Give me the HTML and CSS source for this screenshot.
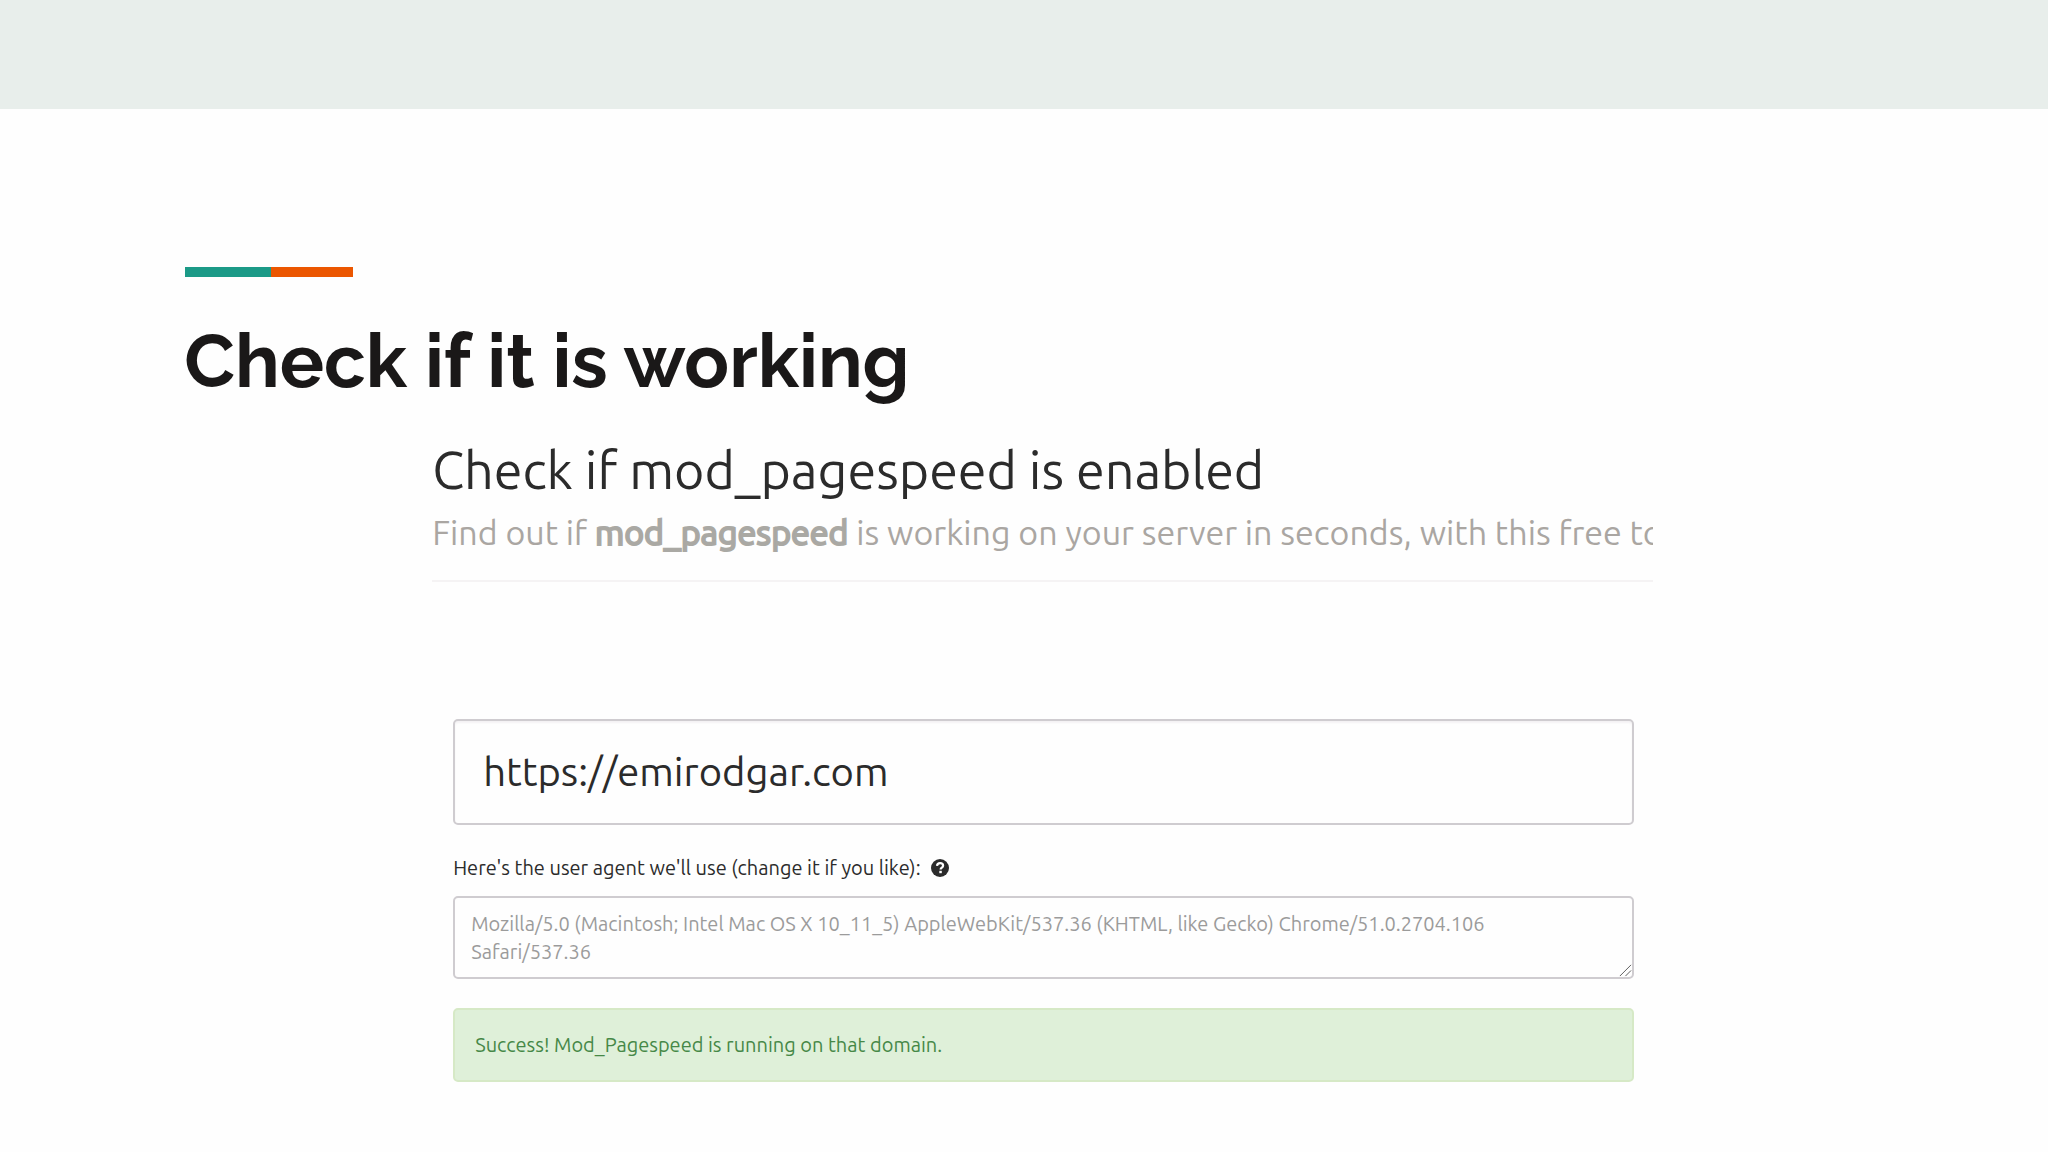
FILE: index.html
```html
<!DOCTYPE html>
<html lang="en">
<head>
<meta charset="utf-8">
<meta name="viewport" content="width=device-width, initial-scale=1">
<title>Check if it is working</title>
<link rel="stylesheet" href="styles.css">
</head>
<body>
<header class="band"></header>
<main class="slide">
  <div class="accent"></div>
  <h1 class="title">Check if it is working</h1>
  <section class="checker">
    <div class="page-header">
      <h2 class="heading">Check if mod_pagespeed is enabled</h2>
      <p class="lead">Find out if <strong>mod_pagespeed</strong> is working on your server in seconds, with this free tool</p>
    </div>
    <form class="form">
      <input class="field url" type="text" value="https://emirodgar.com" aria-label="Website address">
      <label class="label" for="agent">Here's the user agent we'll use (change it if you like):
        <svg class="help" viewBox="0 0 18 18" aria-hidden="true"><circle cx="9" cy="9" r="9" fill="#2b2b2b"/><path d="M6 6.9C6.2 5 7.400 4.200 9.100 4.200c1.800 0 3 1 3 2.500 0 2-2.500 2-2.500 3.900" fill="none" stroke="#fff" stroke-width="2.200"/><rect x="8.300" y="11.800" width="2.500" height="2.400" fill="#fff"/></svg>
      </label>
      <textarea class="field agent" id="agent" rows="2" placeholder="Mozilla/5.0 (Macintosh; Intel Mac OS X 10_11_5) AppleWebKit/537.36 (KHTML, like Gecko) Chrome/51.0.2704.106 Safari/537.36"></textarea>
      <p class="alert" role="status">Success! Mod_Pagespeed is running on that domain.</p>
    </form>
  </section>
</main>
</body>
</html>
```
FILE: styles.css
```css
* {
  box-sizing: border-box;
}

body {
  margin: 0;
  background: #fefefe;
  color: #2b2b2b;
  font-family: Ubuntu, "Noto Sans", sans-serif;
  font-size: 20px;
  line-height: 28px;
}

.band {
  height: 109px;
  background: #e8eeeb;
}

.slide {
  padding: 158px 0 0 9%;
}

.accent {
  width: 168px;
  height: 10px;
  margin-left: 1px;
  background: linear-gradient(to right, #1b9a87 51%, #eb5600 51%);
}

.title {
  margin: 40px 0 0;
  color: #1a1818;
  font-family: Raleway, Lato, sans-serif;
  font-size: 74px;
  font-weight: 700;
  line-height: 88px;
}

.checker {
  width: 65.500%;
  margin: 34px 0 0 13.300%;
}

.page-header {
  height: 143px;
  overflow: hidden;
  border-bottom: 2px solid #f5f3f4;
}

.heading {
  margin: 0;
  font-size: 52px;
  font-weight: 400;
  line-height: 62px;
}

.lead {
  margin: 11px 0 0;
  color: #aaa6a2;
  font-size: 34px;
  line-height: 40px;
  white-space: nowrap;
}

.lead strong {
  font-weight: 400;
  -webkit-text-stroke: 2px #aaa9a4;
}

.form {
  display: flex;
  flex-direction: column;
  margin: 137px 19px 0 21px;
}

.field {
  width: 100%;
  border: 2px solid #cfccd0;
  border-radius: 5px;
  background: #fefefe;
  color: #2b2b2b;
  font-family: inherit;
  outline: 0;
}

.url {
  height: 106px;
  padding: 0 28px 2px;
  box-shadow: inset 0 2px 2px #f4f2f4;
  font-size: 40px;
}

.label {
  display: flex;
  align-items: center;
  gap: 10px;
  margin: 29px 0 14px;
}

.help {
  width: 18px;
  height: 18px;
}

.agent {
  display: block;
  height: 83px;
  padding: 12px 40px 10px 16px;
  overflow: hidden;
  font-size: 20px;
  line-height: 28px;
  resize: vertical;
}

.agent::placeholder {
  color: #9b9b9b;
}

.agent::-webkit-resizer {
  background: url("data:image/svg+xml,%3Csvg xmlns='http://www.w3.org/2000/svg' viewBox='0 0 15 15'%3E%3Cpath d='M2 14L14 2M8 14l6-6' stroke='%23555' fill='none'/%3E%3C/svg%3E") right bottom / 14px 14px no-repeat;
}

.alert {
  margin: 29px 0 0;
  padding: 21px 20px;
  border: 2px solid #d6e9c6;
  border-radius: 5px;
  background: #dff0d9;
  color: #468847;
}
```
